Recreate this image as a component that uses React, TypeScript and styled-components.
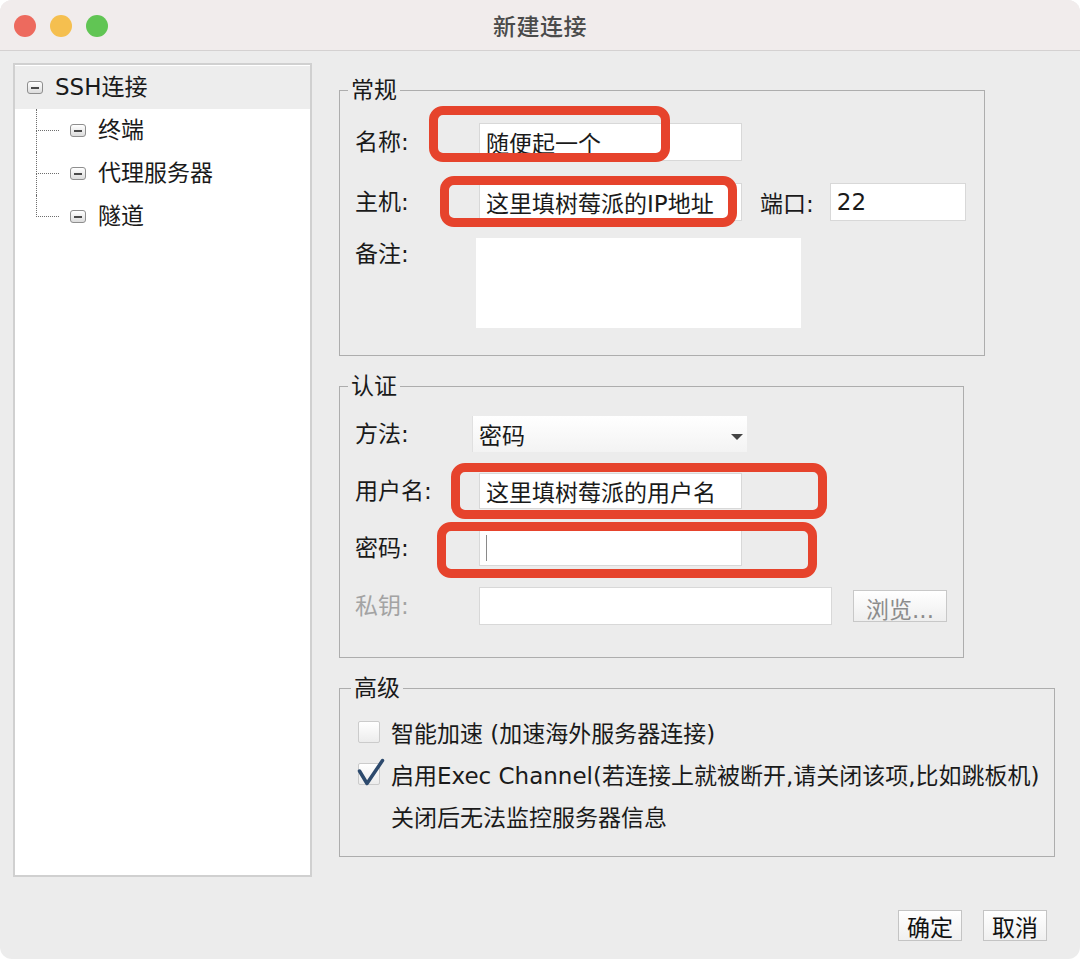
import styled, { createGlobalStyle } from 'styled-components'

const GlobalStyle = createGlobalStyle`
  html, body {
    margin: 0;
    padding: 0;
    background: #ffffff;
  }
  body {
    font-family: "DejaVu Sans", "Noto Sans CJK SC", sans-serif;
    color: #1a1a1a;
  }
`

const App = () => {
  return (
    <>
      <GlobalStyle />
      <Window>
        <TitleBar>
          <Lights>
            <Light $color="#ed6a5e" />
            <Light $color="#f5bf4f" />
            <Light $color="#61c554" />
          </Lights>
          <Title>新建连接</Title>
          <span />
        </TitleBar>

        <Content>
          <Main>
            <TreePanel>
              <TreeRow $selected>
                <RootIndent />
                <ToggleIcon />
                <TreeLabel>SSH连接</TreeLabel>
              </TreeRow>
              {['终端', '代理服务器', '隧道'].map((name, i, all) => (
                <TreeRow key={name}>
                  <Connector>
                    <ConnectorTop />
                    <ConnectorBottom $last={i === all.length - 1} />
                  </Connector>
                  <ToggleIcon />
                  <TreeLabel>{name}</TreeLabel>
                </TreeRow>
              ))}
            </TreePanel>

            <Settings>
              <Group $width={646} $pad="20px 0 27px 15px">
                <Legend>常规</Legend>
                <FormRow $h={38}>
                  <Label>名称:</Label>
                  <Field $w={263}>随便起一个</Field>
                  <Highlight $left={74} $top={-17} $w={241} $h={56} />
                </FormRow>
                <FormRow $h={38} $mt={22}>
                  <Label>主机:</Label>
                  <Field $w={263}>这里填树莓派的IP地址</Field>
                  <PortLabel>端口:</PortLabel>
                  <Field $w={136}>22</Field>
                  <Highlight $left={85} $top={-7} $w={297} $h={51} />
                </FormRow>
                <FormRow $h={90} $mt={17} $top>
                  <Label $offset={1}>备注:</Label>
                  <Notes />
                </FormRow>
              </Group>

              <Group $width={625} $pad="17px 0 32px 15px">
                <Legend>认证</Legend>
                <FormRow $h={36}>
                  <Label>方法:</Label>
                  <Combo>
                    密码
                    <ComboArrow />
                  </Combo>
                </FormRow>
                <FormRow $h={36} $mt={21}>
                  <Label>用户名:</Label>
                  <Field $w={263}>这里填树莓派的用户名</Field>
                  <Highlight $left={96} $top={-10} $w={376} $h={56} />
                </FormRow>
                <FormRow $h={36} $mt={21}>
                  <Label>密码:</Label>
                  <Field $w={263}>
                    <Caret />
                  </Field>
                  <Highlight $left={82} $top={-8} $w={380} $h={56} />
                </FormRow>
                <FormRow $h={38} $mt={21}>
                  <Label $disabled>私钥:</Label>
                  <Field $w={353} />
                  <BrowseButton>浏览...</BrowseButton>
                </FormRow>
              </Group>

              <Group $width={716} $pad="10px 0 20px 18px">
                <Legend>高级</Legend>
                <CheckRow>
                  <CheckBox />
                  <span>智能加速 (加速海外服务器连接)</span>
                </CheckRow>
                <CheckRow>
                  <CheckBox>
                    <CheckMark viewBox="0 0 28 28">
                      <path d="M2.5 13 L10 25.5 L25.5 2.5" />
                    </CheckMark>
                  </CheckBox>
                  <span>启用Exec Channel(若连接上就被断开,请关闭该项,比如跳板机)</span>
                </CheckRow>
                <NoteLine>关闭后无法监控服务器信息</NoteLine>
              </Group>
            </Settings>
          </Main>

          <Footer>
            <DialogButton>确定</DialogButton>
            <DialogButton>取消</DialogButton>
          </Footer>
        </Content>
      </Window>
    </>
  )
}

const Window = styled.div`
  width: 1080px;
  height: 959px;
  border-radius: 12px;
  overflow: hidden;
  background: #ececec;
  display: flex;
  flex-direction: column;
`

const TitleBar = styled.div`
  height: 50px;
  flex-shrink: 0;
  background: #f1ecec;
  border-bottom: 1px solid #d4d1d1;
  display: grid;
  grid-template-columns: 1fr auto 1fr;
  align-items: center;
`

const Lights = styled.div`
  display: flex;
  gap: 14px;
  padding-left: 14px;
  padding-top: 1px;
`

const Light = styled.span<{ $color: string }>`
  width: 22px;
  height: 22px;
  border-radius: 50%;
  background: ${(p) => p.$color};
`

const Title = styled.div`
  font-family: "Noto Sans CJK SC", sans-serif;
  font-size: 23px;
  font-weight: 500;
  color: #4a4a4a;
  letter-spacing: 0.5px;
`

const Content = styled.div`
  flex: 1;
  display: flex;
  flex-direction: column;
  padding: 12px 33px 18px 13px;
  font-size: 23px;
`

const Main = styled.div`
  display: flex;
  gap: 27px;
  height: 814px;
`

const TreePanel = styled.div`
  width: 299px;
  flex-shrink: 0;
  box-sizing: border-box;
  border: 2px solid #d0d0d0;
  background: #ffffff;
  padding-top: 1px;
`

const TreeRow = styled.div<{ $selected?: boolean }>`
  height: 43px;
  display: flex;
  align-items: center;
  background: ${(p) => (p.$selected ? '#ededed' : 'transparent')};
`

const RootIndent = styled.span`
  width: 12px;
`

const Connector = styled.span`
  align-self: stretch;
  width: 23px;
  margin-left: 21px;
  margin-right: 11px;
  display: flex;
  flex-direction: column;
`

const ConnectorTop = styled.span`
  flex: 1;
  border-left: 1px dotted #6e6e6e;
  border-bottom: 1px dotted #6e6e6e;
`

const ConnectorBottom = styled.span<{ $last: boolean }>`
  flex: 1;
  border-left: 1px dotted ${(p) => (p.$last ? 'transparent' : '#6e6e6e')};
`

const ToggleIcon = styled.span`
  width: 16px;
  height: 13px;
  box-sizing: border-box;
  border: 1px solid #8e8e8e;
  border-radius: 3px;
  background: linear-gradient(#ffffff, #dcdcdc);
  display: flex;
  align-items: center;
  justify-content: center;
  margin-right: 12px;

  &::after {
    content: '';
    width: 8px;
    height: 2px;
    background: #4a4a4a;
  }
`

const TreeLabel = styled.span`
  line-height: 1;
`

const Settings = styled.div`
  display: flex;
  flex-direction: column;
  gap: 17px;
  padding-top: 14px;
`

const Group = styled.fieldset<{ $width: number; $pad: string }>`
  width: ${(p) => p.$width}px;
  box-sizing: border-box;
  margin: 0;
  padding: ${(p) => p.$pad};
  border: 1px solid #adadad;
  min-width: 0;
`

const Legend = styled.legend`
  font-size: 23px;
  line-height: 26px;
  padding: 0 3px;
  margin-left: -7px;
`

const FormRow = styled.div<{ $h: number; $mt?: number; $top?: boolean }>`
  position: relative;
  height: ${(p) => p.$h}px;
  margin-top: ${(p) => p.$mt ?? 0}px;
  display: flex;
  align-items: ${(p) => (p.$top ? 'flex-start' : 'center')};
`

const Label = styled.span<{ $disabled?: boolean; $offset?: number }>`
  width: 124px;
  flex-shrink: 0;
  line-height: 30px;
  padding-top: ${(p) => p.$offset ?? 0}px;
  color: ${(p) => (p.$disabled ? '#a3a3a3' : '#1a1a1a')};
`

const Field = styled.div<{ $w: number }>`
  width: ${(p) => p.$w}px;
  height: 100%;
  box-sizing: border-box;
  border: 1px solid #d8d8d8;
  background: #ffffff;
  padding: 0 6px;
  display: flex;
  align-items: center;
  white-space: nowrap;
  overflow: hidden;
`

const PortLabel = styled.span`
  margin-left: 18px;
  margin-right: 16px;
`

const Notes = styled.div`
  width: 325px;
  height: 90px;
  margin-left: -3px;
  background: #ffffff;
`

const Highlight = styled.span<{ $left: number; $top: number; $w: number; $h: number }>`
  position: absolute;
  left: ${(p) => p.$left}px;
  top: ${(p) => p.$top}px;
  width: ${(p) => p.$w}px;
  height: ${(p) => p.$h}px;
  box-sizing: border-box;
  border: 9px solid #e6432c;
  border-radius: 14px;
  pointer-events: none;
`

const Combo = styled.div`
  position: relative;
  width: 275px;
  height: 100%;
  margin-left: -7px;
  box-sizing: border-box;
  border-left: 1px solid #e0e0e0;
  background: linear-gradient(#ffffff, #f3f3f3);
  padding: 0 6px;
  display: flex;
  align-items: center;
`

const ComboArrow = styled.span`
  position: absolute;
  right: 4px;
  top: 18px;
  border-left: 6px solid transparent;
  border-right: 6px solid transparent;
  border-top: 6px solid #444444;
`

const Caret = styled.span`
  width: 1px;
  height: 26px;
  background: #8a8a8a;
`

const BrowseButton = styled.button`
  margin-left: 21px;
  width: 94px;
  height: 32px;
  box-sizing: border-box;
  border: 1px solid #c8c8c8;
  background: linear-gradient(#ffffff, #eeeeee);
  font: inherit;
  font-size: 23px;
  color: #8c8c8c;
  padding: 0;
`

const CheckRow = styled.div`
  height: 42px;
  display: flex;
  align-items: center;
  gap: 11px;
`

const CheckBox = styled.span`
  position: relative;
  width: 22px;
  height: 22px;
  box-sizing: border-box;
  border: 1px solid #cbcbcb;
  border-radius: 2px;
  background: linear-gradient(#ffffff, #ececec);
  flex-shrink: 0;
`

const CheckMark = styled.svg`
  position: absolute;
  left: -2px;
  top: -6px;
  width: 28px;
  height: 28px;
  fill: none;
  stroke: #2d4a6d;
  stroke-width: 3.5;
  stroke-linecap: round;
  stroke-linejoin: round;
`

const NoteLine = styled.div`
  height: 41px;
  display: flex;
  align-items: center;
  padding-left: 33px;
`

const Footer = styled.div`
  display: flex;
  justify-content: flex-end;
  gap: 21px;
  margin-top: 33px;
`

const DialogButton = styled.button`
  width: 64px;
  height: 31px;
  box-sizing: border-box;
  border: 1px solid #c4c4c4;
  background: linear-gradient(#ffffff, #f0f0f0);
  font: inherit;
  font-size: 23px;
  color: #111111;
  padding: 0;
  display: flex;
  align-items: center;
  justify-content: center;
`

export default App
